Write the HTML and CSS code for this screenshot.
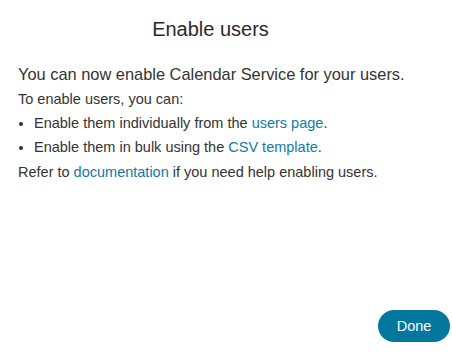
FILE: index.html
```html
<!DOCTYPE html>
<html lang="en">
<head>
  <meta charset="UTF-8">
  <meta name="viewport" content="width=device-width, initial-scale=1.0">
  <title>Enable users</title>
  <link rel="stylesheet" href="styles.css">
</head>
<body>
  <div class="modal">
    <h2 class="modal-title">Enable users</h2>

    <!-- Cuerpo del mensaje -->
    <div class="modal-body">
      <p class="lead">You can now enable Calendar Service for your users.</p>
      <p>To enable users, you can:</p>
      <ul>
        <li>Enable them individually from the <a href="#">users page</a>.</li>
        <li>Enable them in bulk using the <a href="#">CSV template</a>.</li>
      </ul>
      <p class="note">Refer to <a href="#">documentation</a> if you need help enabling users.</p>
    </div>

    <div class="modal-footer">
      <button type="button">Done</button>
    </div>
  </div>
</body>
</html>
```

FILE: styles.css
```css
body {
  margin: 0;
  background: #ffffff;
  font-family: 'Liberation Sans', Arial, sans-serif;
  color: #333333;
}
.modal {
  width: 452px;
  height: 356px;
  display: flex;
  flex-direction: column;
  box-sizing: border-box;
  padding: 0 2px 14px 18px;
}
.modal-title {
  margin: 18px 0 0;
  padding-right: 47px;
  text-align: center;
  font-size: 20px;
  font-weight: normal;
  color: #2a2a2a;
}
.modal-body {
  margin-top: 20px;
  font-size: 14.5px;
  line-height: 24px;
}
.modal-body p {
  margin: 0;
}
.modal-body .lead {
  font-size: 16.4px;
  line-height: 26px;
}
.modal-body .note {
  margin-top: 1px;
}
.modal-body ul {
  margin: 0;
  padding-left: 16px;
}
.modal-body a {
  color: #0f7aa8;
  text-decoration: none;
}
.modal-footer {
  margin-top: auto;
  display: flex;
  justify-content: flex-end;
}
.modal-footer button {
  width: 72px;
  height: 32px;
  border: none;
  border-radius: 16px;
  background-color: #04779f;
  color: #ffffff;
  font-family: inherit;
  font-size: 14.5px;
  cursor: pointer;
}
```
